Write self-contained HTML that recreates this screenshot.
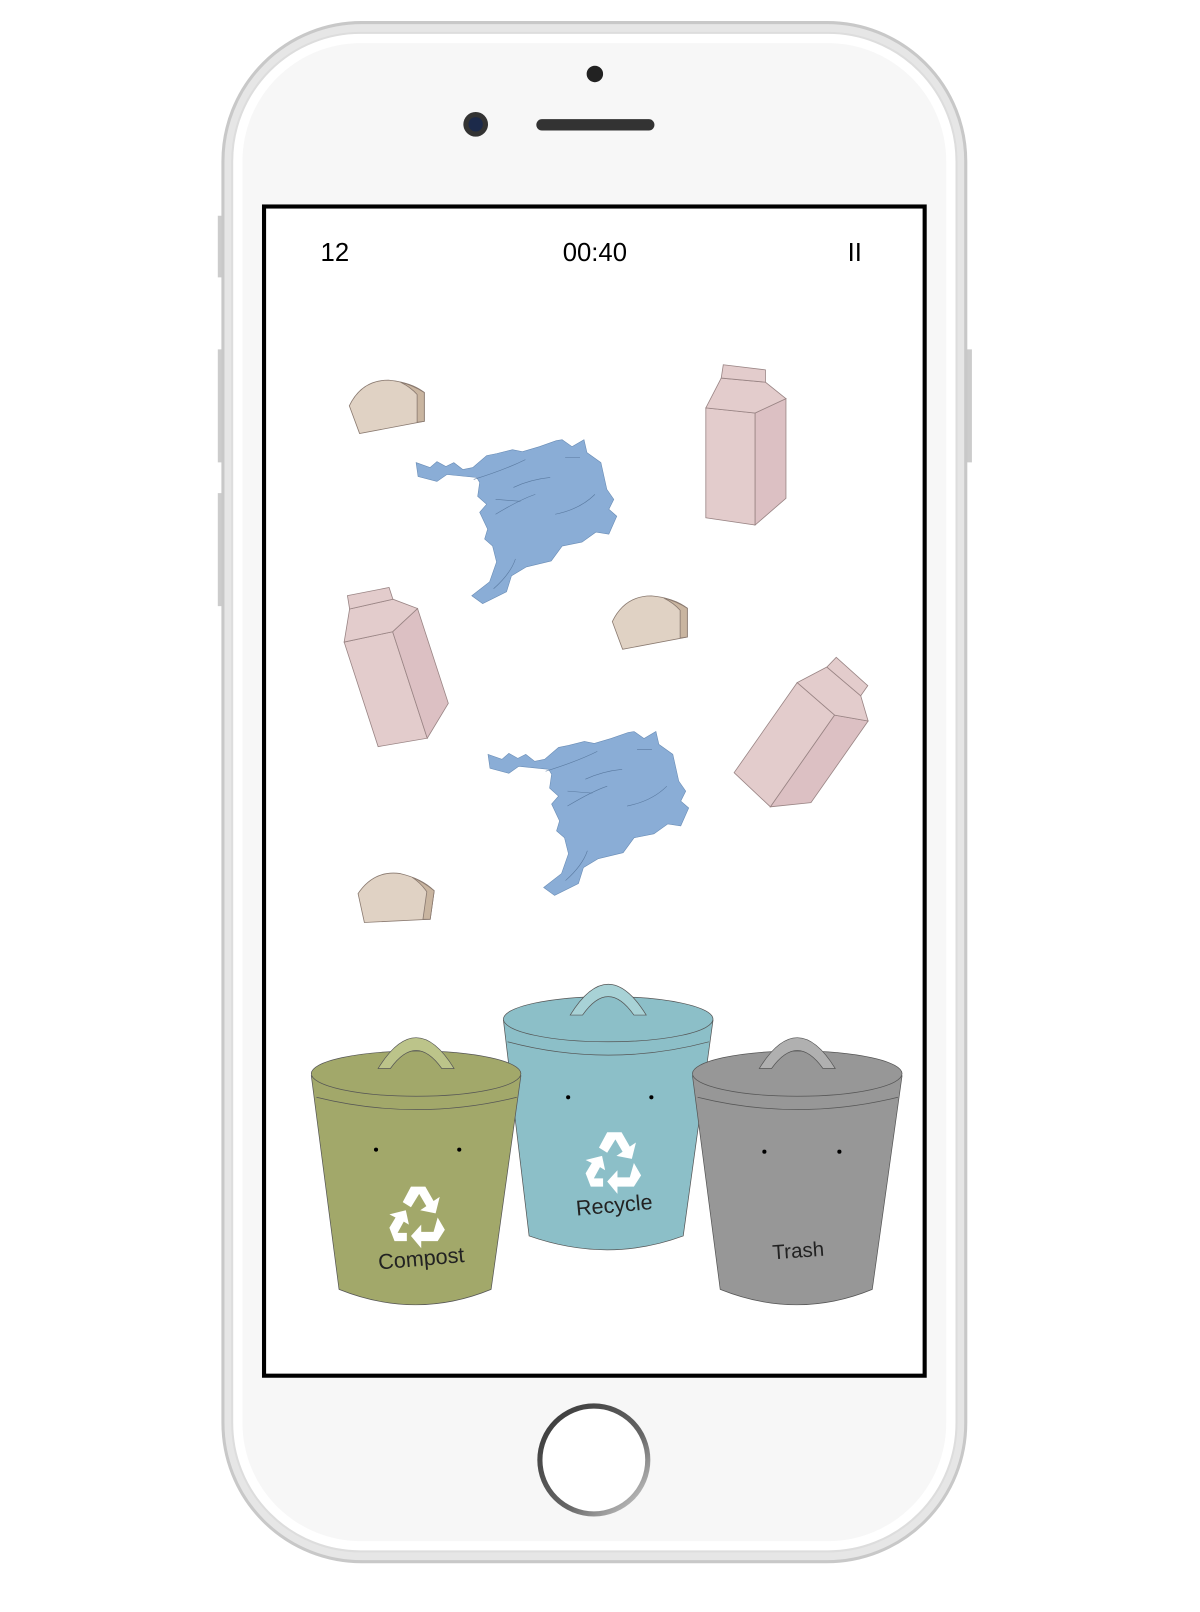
<!DOCTYPE html>
<html><head><meta charset="utf-8"><style>
html,body{margin:0;padding:0;background:#fff;width:1200px;height:1612px;overflow:hidden}
svg{display:block}
text{font-family:"Liberation Sans",sans-serif}
</style></head><body>
<svg width="1200" height="1612" viewBox="0 0 1168 1569" preserveAspectRatio="none" xmlns="http://www.w3.org/2000/svg">
<defs>
<linearGradient id="home" x1="0" y1="0" x2="1" y2="1"><stop offset="0" stop-color="#333"/><stop offset=".6" stop-color="#666"/><stop offset="1" stop-color="#ddd"/></linearGradient>
<g id="bread"><path d="M0,25 Q12,0 38,0 Q60,2 73,12 L73,40 L10,52 Z" fill="#e0d2c4" stroke="#8a7a70" stroke-width=".8"/><path d="M50,2 Q62,5 73,12 L73,40 L66,41 L66,14 Q60,7 50,2Z" fill="#c9b5a0" stroke="#8a7a70" stroke-width=".8"/></g>
<g id="carton" stroke="#9a8585" stroke-width=".8"><path d="M0,42 L48,47 L48,156 L0,149Z" fill="#e3cccc"/><path d="M48,47 L78,33 L78,130 L48,156Z" fill="#dcc0c3"/><path d="M0,42 L15,13 L58,17 L78,33 L48,47Z" fill="#e3cccc"/><path d="M17,0 L58,5 L58,17 L15,13Z" fill="#e3cccc"/></g>
<g id="bag" transform="scale(.967)"><path d="M0,23 L14,28 L21,22 L30,27 L38,23 L47,30 L57,28 L71,16 L81,14 L97,10 L107,12 L124,7 L141,1 L147,0 L157,7 L169,0 L172,13 L186,23 L192,50 L199,60 L194,70 L202,77 L194,95 L181,93 L167,103 L147,107 L136,122 L111,128 L96,137 L91,153 L67,165 L56,157 L74,143 L81,123 L77,107 L69,100 L72,90 L64,73 L71,65 L62,57 L64,43 L61,38 L31,35 L21,42 L2,37Z" fill="#8aadd6" stroke="#6a8db6" stroke-width=".6"/><path d="M58,40 Q90,30 110,20 M98,48 Q115,40 135,38 M150,18 L165,18 M140,75 Q165,70 180,55 M80,60 L105,62 M80,75 Q105,60 120,55 M78,150 Q95,135 100,120" fill="none" stroke="#5a7aa0" stroke-width=".6"/></g>
<g id="recy" fill="#fff"><path d="M-6,-26 L8,-26 L16,-12 L22,-16 L18,0 L3,-3 L9,-7 L2,-19 L-6,-6 L-14,-11Z"/><path d="M20,4 L27,16 L20,27 L4,27 L4,34 L-6,22 L4,11 L4,18 L16,18Z"/><path d="M-10,27 L-22,27 L-27,14 L-21,4 L-27,1 L-11,-3 L-8,11 L-13,8 L-19,19 L-10,19Z"/></g>
</defs>
<path d="M212,210 h6 v60 h-6z M212,340 h6 v110 h-6z M212,480 h6 v110 h-6z M940,340 h6 v110 h-6z" fill="#ccc"/>
<rect x="217" y="22" width="723" height="1498" rx="135" fill="#e6e6e6" stroke="#c8c8c8" stroke-width="3"/>
<rect x="226" y="32" width="705" height="1478" rx="125" fill="#fff" stroke="#ddd" stroke-width="2"/>
<rect x="236" y="42" width="685" height="1458" rx="115" fill="#f7f7f7"/>
<circle cx="579" cy="72" r="8" fill="#222"/>
<circle cx="463" cy="121" r="12" fill="#333"/><circle cx="463" cy="121" r="7" fill="#1c2a4a"/>
<rect x="522" y="116" width="115" height="11" rx="5.5" fill="#333"/>
<rect x="257" y="201" width="643" height="1138" fill="#fff" stroke="#000" stroke-width="4"/>
<circle cx="578" cy="1421" r="55" fill="url(#home)"/><circle cx="578" cy="1421" r="50" fill="#fff"/>
<text x="312" y="254" font-size="25" fill="#000">12</text>
<text x="579" y="254" font-size="25" fill="#000" text-anchor="middle">00:40</text>
<text x="832" y="254" font-size="25" fill="#000" text-anchor="middle">II</text>
<use href="#bread" transform="translate(340,370)"/>
<use href="#bread" transform="translate(596,580)"/>
<use href="#bread" transform="translate(352,845) rotate(8)"/>
<use href="#carton" transform="translate(687,355)"/>
<use href="#carton" transform="translate(322,585) rotate(-18)"/>
<use href="#carton" transform="translate(800,630) rotate(35)"/>
<use href="#bag" transform="translate(405,428)"/>
<use href="#bag" transform="translate(475,712)"/>
<g stroke="#555" stroke-width=".7">
<path d="M490,993 L515,1203 Q592,1230 665,1203 L694,993Z" fill="#8cbfc8"/>
<ellipse cx="592" cy="992" rx="102" ry="22" fill="#8cbfc8"/>
<path d="M494,1014 Q592,1040 690,1014" fill="none"/>
<path d="M555,988 Q592,928 629,988 L617,988 Q592,952 567,988Z" fill="#a8d2d6"/>
<path d="M303,1047 L330,1255 Q405,1285 478,1255 L507,1047Z" fill="#a2a86a"/>
<ellipse cx="405" cy="1045" rx="102" ry="22" fill="#a2a86a"/>
<path d="M308,1068 Q405,1092 503,1068" fill="none"/>
<path d="M368,1040 Q405,980 442,1040 L430,1040 Q405,1005 380,1040Z" fill="#bcc48a"/>
<path d="M674,1047 L701,1255 Q776,1285 849,1255 L878,1047Z" fill="#979797"/>
<ellipse cx="776" cy="1045" rx="102" ry="22" fill="#979797"/>
<path d="M679,1068 Q776,1092 874,1068" fill="none"/>
<path d="M739,1040 Q776,980 813,1040 L801,1040 Q776,1005 751,1040Z" fill="#b0b0b0"/>
</g>
<g fill="#000"><circle cx="366" cy="1119" r="2"/><circle cx="447" cy="1119" r="2"/><circle cx="553" cy="1068" r="2"/><circle cx="634" cy="1068" r="2"/><circle cx="744" cy="1121" r="2"/><circle cx="817" cy="1121" r="2"/></g>
<use href="#recy" transform="translate(406,1181)"/>
<use href="#recy" transform="translate(597,1128)"/>
<text x="410" y="1232" font-size="21" fill="#222" text-anchor="middle" transform="rotate(-5 410 1225)">Compost</text>
<text x="598" y="1180" font-size="21" fill="#222" text-anchor="middle" transform="rotate(-5 598 1175)">Recycle</text>
<text x="777" y="1224" font-size="20" fill="#222" text-anchor="middle" transform="rotate(-4 777 1218)">Trash</text>
</svg>
</body></html>
